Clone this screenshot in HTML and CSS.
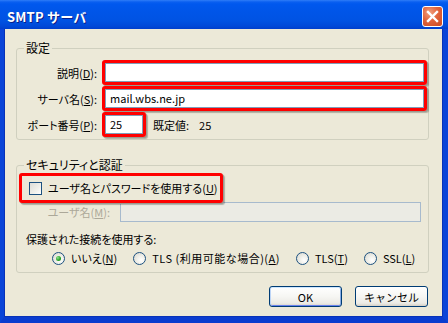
FILE: index.html
```html
<!DOCTYPE html>
<html lang="ja">
<head>
<meta charset="utf-8">
<title>SMTP サーバ</title>
<link rel="stylesheet" href="styles.css">
</head>
<body>
<div class="window">
  <div class="titlebar">
    <span class="title">SMTP サーバ</span>
    <span class="close">
      <svg width="13" height="13" viewBox="0 0 13 13"><path d="M2 2 L11 11 M11 2 L2 11" stroke="#fff" stroke-width="2.4" stroke-linecap="square"/></svg>
    </span>
  </div>
  <div class="client">
    <fieldset class="group g1">
      <legend>設定</legend>
      <div class="form">
        <span class="lbl">説明(<u>D</u>):</span>
        <div class="hl"><div class="input"></div></div>
        <span class="lbl">サーバ名(<u>S</u>):</span>
        <div class="hl"><div class="input">mail.wbs.ne.jp</div></div>
        <span class="lbl">ポート番号(<u>P</u>):</span>
        <div class="portrow">
          <div class="hl port"><div class="input">25</div></div>
          <span class="def">既定値:</span>
          <span class="defval">25</span>
        </div>
      </div>
    </fieldset>
    <fieldset class="group g2">
      <legend>セキュリティと認証</legend>
      <div class="hl chkbox">
        <span class="check"></span>
        <span class="chklbl">ユーザ名とパスワードを使用する(<u>U</u>)</span>
      </div>
      <div class="userrow">
        <span class="lbl disabled">ユーザ名(<u>M</u>):</span>
        <div class="input dis"></div>
      </div>
      <div class="conn">保護された接続を使用する:</div>
      <div class="radios">
        <span class="opt"><span class="radio on"></span><span>いいえ(<u>N</u>)</span></span>
        <span class="opt"><span class="radio"></span><span class="tlsopt">TLS (利用可能な場合)(<u>A</u>)</span></span>
        <span class="opt"><span class="radio"></span><span>TLS(<u>T</u>)</span></span>
        <span class="opt"><span class="radio"></span><span>SSL(<u>L</u>)</span></span>
      </div>
    </fieldset>
    <div class="buttons">
      <button class="btn default">OK</button>
      <button class="btn">キャンセル</button>
    </div>
  </div>
</div>
</body>
</html>
```
FILE: styles.css
```css
* { box-sizing: border-box; }
html, body { margin: 0; padding: 0; background: #fff; }
body {
  font-family: "Noto Sans CJK JP", "Noto Sans", sans-serif;
  font-size: 11px;
  font-feature-settings: "palt";
  color: #000;
}
u { text-decoration: underline; text-underline-offset: 1px; }

.window { width: 448px; height: 323px; display: flex; flex-direction: column; }

.titlebar {
  height: 29px;
  flex: none;
  display: flex;
  align-items: center;
  justify-content: space-between;
  padding: 0 5px 0 7px;
  background: linear-gradient(to bottom, #2f7df7 0, #0a5ff0 2px, #0058ee 4px, #0055e8 40%, #0053e3 70%, #0049d8 90%, #003fcc 100%);
}
.title {
  color: #fff;
  font-weight: bold;
  font-size: 13px;
  letter-spacing: 0.2px;
  margin-top: 3px;
  text-shadow: 1px 1px 0 #0a1e8a;
  font-feature-settings: normal;
}
.close {
  width: 21px;
  height: 21px;
  margin-top: 3px;
  border: 1px solid #fff;
  border-radius: 3px;
  background: radial-gradient(circle at 35% 30%, #f0a080 0, #e2643c 45%, #cc4a20 100%);
  display: flex;
  align-items: center;
  justify-content: center;
}
.close svg { display: block; }

.client {
  flex: 1;
  background: #ece9d8;
  border-left: 4px solid #0a44d8;
  border-right: 5px solid #0a44d8;
  border-bottom: 6px solid #0a3ccf;
  box-shadow: inset 1px 0 0 #0832b8, inset -1px 0 0 #0832b8, inset 0 -1px 0 #0832b8;
  display: flex;
  flex-direction: column;
}

.group {
  margin: 0 14px 0 12px;
  padding: 0;
  width: 413px;
  border: 1px solid #d0d0bf;
  border-radius: 3px;
  min-inline-size: 0;
}
.group legend {
  margin-left: 7px;
  padding: 0 2px;
  line-height: 14px;
  height: 14px;
  font-size: 12px;
}
.g1 { margin-top: 12px; padding: 5px 1px 2px 0; }
.g2 { margin-top: 18px; padding: 1px 1px 6px 0; }

.form {
  display: grid;
  grid-template-columns: 80px 325px;
  column-gap: 5px;
  row-gap: 1px;
  align-items: center;
}
.lbl { text-align: right; white-space: nowrap; line-height: 14px; }

.hl {
  position: relative;
  z-index: 1;
  border: 3px solid #ff0000;
  border-radius: 3px;
  box-shadow: 1px 1px 0 #9c9a90, 2px 2px 1px rgba(0,0,0,0.25);
}
.input {
  height: 19px;
  border: 1px solid #7f9db9;
  background: #fff;
  padding: 0 0 0 4px;
  font-size: 11px;
  line-height: 17px;
  font-feature-settings: normal;
}
.portrow { display: flex; align-items: center; }
.port { width: 44px; }
.def { margin-left: 7px; }
.defval { margin-left: 10px; }

.chkbox {
  margin-left: 2px;
  width: 204px;
  height: 30px;
  display: flex;
  align-items: center;
  padding-left: 7px;
  gap: 6px;
  line-height: 14px;
  white-space: nowrap;
}
.chklbl { font-size: 11px; }
.check {
  width: 13px;
  height: 13px;
  flex: none;
  border: 1px solid #1c5180;
  background: linear-gradient(135deg, #dcdcd7 0, #f0f0ea 60%, #ffffff 100%);
}

.userrow { display: flex; align-items: center; margin-top: -1px; }
.userrow .lbl { width: 93px; margin-right: 10px; }
.disabled { color: #aca899; }
.input.dis {
  width: 301px;
  height: 20px;
  background: #ebebe4;
  border-color: #a7bacd;
}

.conn { margin: 10px 0 0 9px; line-height: 14px; }

.radios {
  display: flex;
  align-items: center;
  margin: 4px 0 0 35px;
  gap: 16px;
  height: 16px;
}
.opt { display: flex; align-items: center; gap: 6px; line-height: 14px; white-space: nowrap; }
.tlsopt { letter-spacing: 0.5px; font-feature-settings: normal; }
.radio {
  width: 13px;
  height: 13px;
  flex: none;
  border: 1px solid #1c5180;
  border-radius: 50%;
  background: radial-gradient(circle at 65% 65%, #ffffff 0, #f0f0ea 40%, #d6d5cc 100%);
  display: flex;
  align-items: center;
  justify-content: center;
}
.radio.on::after {
  content: "";
  width: 5px;
  height: 5px;
  border-radius: 50%;
  background: radial-gradient(circle at 35% 35%, #8ee08e 0, #21a121 60%, #178017 100%);
}

.buttons {
  display: flex;
  justify-content: flex-end;
  gap: 13px;
  margin: 13px 15px 0 0;
}
.btn {
  width: 73px;
  height: 21px;
  padding: 0;
  font-family: inherit;
  font-size: 11px;
  line-height: 14px;
  color: #000;
  border: 1px solid #003c74;
  border-radius: 3px;
  background: linear-gradient(to bottom, #ffffff 0, #f6f6f3 50%, #ecebe6 85%, #d6d0c5 100%);
}
.btn.default {
  box-shadow: inset 0 1px 0 #cee7ff, inset 1px 0 0 #bcd4f6, inset -1px 0 0 #89ade4, inset 0 -1px 0 #6982ee;
}
```
